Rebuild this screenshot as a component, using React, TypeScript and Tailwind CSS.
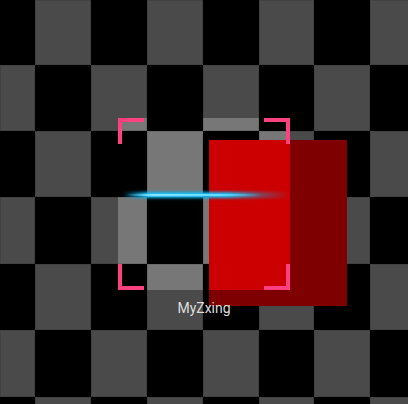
import React from "react";

const rows = 7;
const cols = 8;

function Corner({ pos }: { pos: "tl" | "tr" | "bl" | "br" }) {
  const place = {
    tl: "left-0 top-0 border-l-4 border-t-4",
    tr: "right-0 top-0 border-r-4 border-t-4",
    bl: "left-0 bottom-0 border-l-4 border-b-4",
    br: "right-0 bottom-0 border-r-4 border-b-4",
  }[pos];
  return <div className={`absolute h-[26px] w-[26px] border-[#ff4081] ${place}`} />;
}

function Laser() {
  return (
    <svg className="absolute left-[122px] top-[186px]" width="168" height="18" viewBox="0 0 168 18">
      <defs>
        <linearGradient id="laser" x1="0" x2="1" y1="0" y2="0">
          <stop offset="0" stopColor="#00a8f0" stopOpacity="0" />
          <stop offset="0.15" stopColor="#0ab8f5" stopOpacity="1" />
          <stop offset="0.62" stopColor="#0ab8f5" stopOpacity="1" />
          <stop offset="0.84" stopColor="#0ab8f5" stopOpacity="0.35" />
          <stop offset="1" stopColor="#0ab8f5" stopOpacity="0" />
        </linearGradient>
        <linearGradient id="core" x1="0" x2="1" y1="0" y2="0">
          <stop offset="0" stopColor="#7fe6ff" stopOpacity="0" />
          <stop offset="0.18" stopColor="#7fe6ff" stopOpacity="1" />
          <stop offset="0.6" stopColor="#5ddcff" stopOpacity="1" />
          <stop offset="0.88" stopColor="#5ddcff" stopOpacity="0" />
        </linearGradient>
        <filter id="glow" x="-10%" y="-100%" width="120%" height="300%">
          <feGaussianBlur stdDeviation="1.8" />
        </filter>
      </defs>
      <rect x="0" y="6" width="168" height="6" fill="url(#laser)" filter="url(#glow)" />
      <rect x="4" y="7.8" width="154" height="2.4" fill="url(#core)" />
    </svg>
  );
}

export default function App() {
  return (
    <div className="relative h-[404px] w-[408px] overflow-hidden bg-black font-['Roboto','Noto_Sans',sans-serif]">
      <div className="grid grid-cols-[35px_56px_56px_56px_56px_55px_56px_56px] grid-rows-[65px_66px_66px_67px_66px_67px_66px]">
        {Array.from({ length: rows * cols }).map((_, i) => {
          const r = Math.floor(i / cols);
          const c = i % cols;
          return (
            <div
              key={i}
              className={(r + c) % 2 === 1 ? "bg-[#777777] shadow-[inset_0_0_0_1px_#6a6a6a]" : "bg-black"}
            />
          );
        })}
      </div>

      <div className="absolute left-[209px] top-[140px] h-[166px] w-[138px] bg-[#cc0000]" />

      <div className="absolute left-[118px] top-[118px] h-[172px] w-[172px] shadow-[0_0_0_600px_rgba(0,0,0,0.376)]">
        <Corner pos="tl" />
        <Corner pos="tr" />
        <Corner pos="bl" />
        <Corner pos="br" />
      </div>

      <Laser />

      <div className="absolute left-[118px] top-[298px] w-[172px] text-center text-[14px] leading-5 text-[#dedede]">
        MyZxing
      </div>
    </div>
  );
}
